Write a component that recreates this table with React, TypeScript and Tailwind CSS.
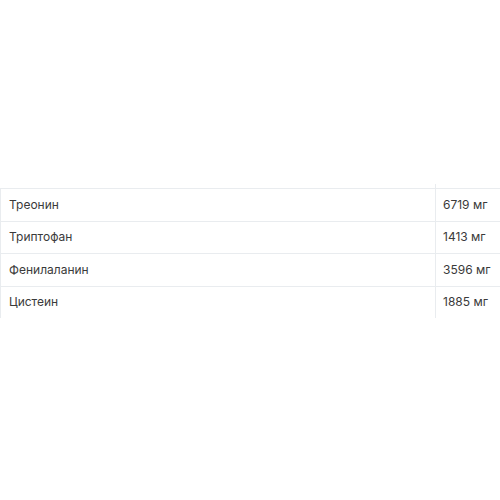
const rows = [
  { name: 'Треонин', value: '6719 мг' },
  { name: 'Триптофан', value: '1413 мг' },
  { name: 'Фенилаланин', value: '3596 мг' },
  { name: 'Цистеин', value: '1885 мг' },
];

export default function App() {
  return (
    <div className="min-h-[500px] w-[500px] bg-white pt-[184px] font-['Inter',sans-serif] text-[12px] text-[#3a3a3a]">
      <div className="grid grid-cols-[435px_1fr]">
        <div className="h-[4px]" />
        <div className="h-[4px] border-l border-[#e9ecef]" />
        {rows.map((r) => (
          <div key={r.name} className="contents">
            <div className="flex h-[32.5px] items-center border-t border-l border-[#e9ecef] pl-[8px]">{r.name}</div>
            <div className="flex h-[32.5px] items-center border-t border-l border-[#e9ecef] pl-[7px]">{r.value}</div>
          </div>
        ))}
      </div>
    </div>
  );
}
